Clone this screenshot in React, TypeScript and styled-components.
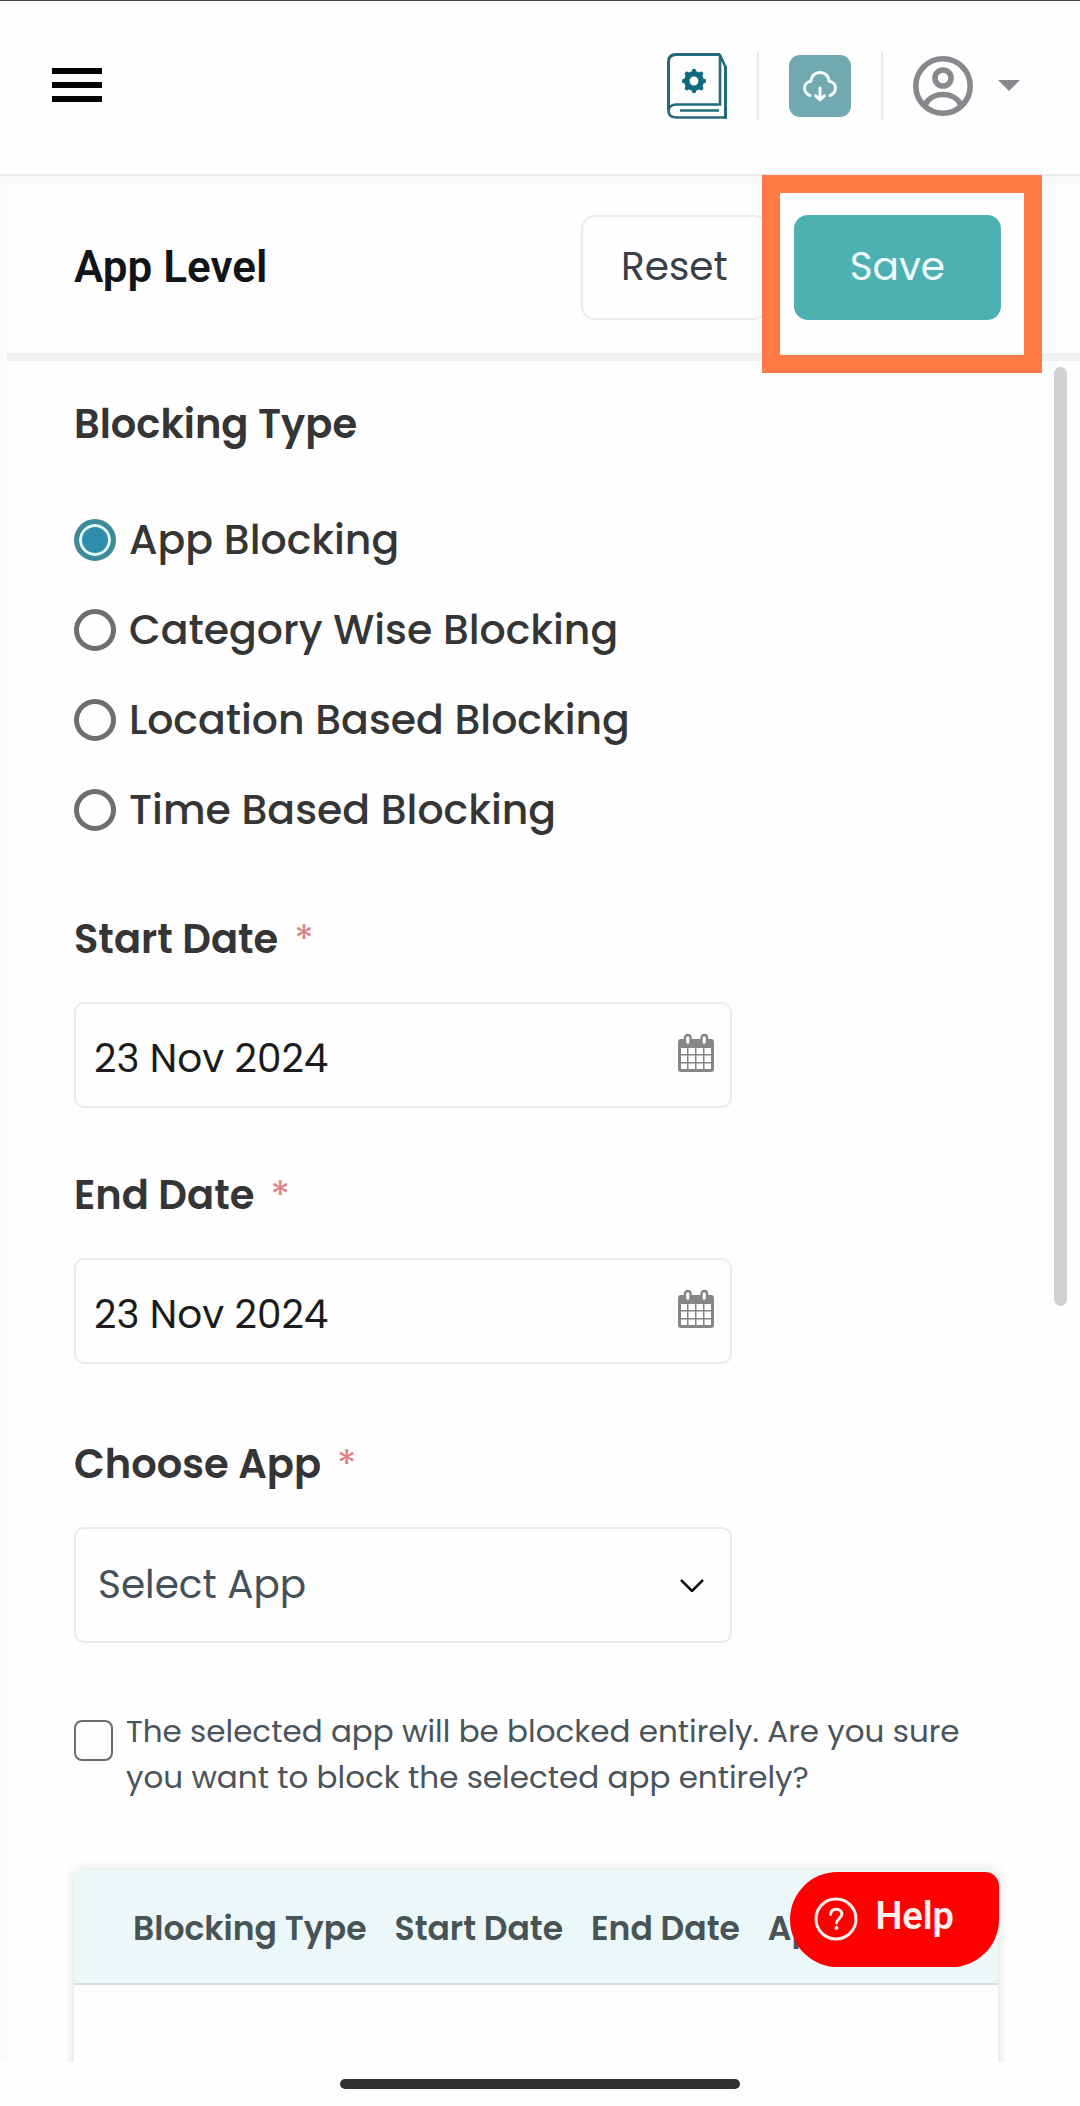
import React, { useState } from "react";
import styled, { createGlobalStyle } from "styled-components";

const GlobalStyle = createGlobalStyle`
  *, *::before, *::after { box-sizing: border-box; }
  body {
    margin: 0;
    background: #fefefe;
    font-family: Poppins, Inter, sans-serif;
    color: #353535;
  }
  button, input, select { font: inherit; color: inherit; margin: 0; }
`;

const Page = styled.div`
  display: flex;
  flex-direction: column;
  height: 100vh;
  overflow: hidden;
  border-top: 1px solid #444;
`;

const Header = styled.header`
  display: flex;
  align-items: center;
  justify-content: space-between;
  flex: none;
  height: 175px;
  padding: 0 60px 4px 52px;
  border-bottom: 2px solid #ececec;
`;

const PlainButton = styled.button`
  display: flex;
  align-items: center;
  padding: 0;
  border: 0;
  background: none;
  cursor: pointer;
`;

const HeaderTools = styled.div`
  display: flex;
  align-items: center;
  gap: 30px;
`;

const Divider = styled.span`
  width: 2px;
  height: 68px;
  background: #ebebeb;
`;

const CloudButton = styled(PlainButton)`
  justify-content: center;
  width: 62px;
  height: 62px;
  border-radius: 11px;
  background: #71a9b0;
`;

const AccountButton = styled(PlainButton)`
  gap: 25px;
`;

const Shell = styled.div`
  display: flex;
  flex: 1;
  flex-direction: column;
  min-height: 0;
  border-left: 7px solid #fafafa;
`;

const TitleBar = styled.div`
  display: flex;
  align-items: flex-start;
  justify-content: space-between;
  flex: none;
  padding: 39px 79px 33px 67px;
  border-bottom: 8px solid #f0f0f0;
  background: linear-gradient(#f8f8f8, #fefefe 16px);
`;

const Title = styled.h1`
  margin: 0;
  font: 600 44px/104px Roboto, sans-serif;
  color: #111517;
`;

const Actions = styled.div`
  display: flex;
  gap: 26px;
`;

const ActionButton = styled.button<{ $primary?: boolean }>`
  height: 105px;
  padding: 0 ${(p) => (p.$primary ? 56 : 38)}px 2px;
  border: ${(p) => (p.$primary ? "0" : "2px solid #ececec")};
  border-radius: 14px;
  background: ${(p) => (p.$primary ? "#4db1b2" : "#fefefe")};
  color: ${(p) => (p.$primary ? "#effdfd" : "#394047")};
  font-size: 39px;
  cursor: pointer;
`;

const Spotlight = styled.div`
  position: relative;
  &::after {
    content: "";
    position: absolute;
    inset: -40px -41px -53px -32px;
    border: 18px solid #ff7a45;
    pointer-events: none;
  }
`;

const Body = styled.div`
  display: flex;
  flex: 1;
  min-height: 0;
  overflow: hidden;
`;

const Form = styled.form`
  flex: 1;
  min-width: 0;
  padding: 35px 56px 0 67px;
  overflow: hidden;
`;

const ScrollTrack = styled.div`
  flex: none;
  width: 26px;
  padding-top: 6px;
`;

const ScrollThumb = styled.div`
  width: 13px;
  height: 55.4%;
  border-radius: 7px;
  background: #d0d0d0;
`;

const RadioGroup = styled.fieldset`
  display: flex;
  flex-direction: column;
  gap: 30px;
  margin: 0 0 71px;
  padding: 0;
  border: 0;
`;

const Legend = styled.legend`
  margin-bottom: 58px;
  padding: 0;
  font-size: 40px;
  font-weight: 600;
  line-height: 56px;
`;

const RadioRow = styled.label`
  display: flex;
  align-items: center;
  gap: 13px;
  font-size: 41px;
  font-weight: 500;
  line-height: 60px;
`;

const Radio = styled.input`
  appearance: none;
  flex: none;
  width: 42px;
  height: 42px;
  border: 5px solid #6e6e6e;
  border-radius: 50%;
  background: #fefefe;
  &:checked {
    border-color: #3d8a9b;
    background: #2f8eae;
    box-shadow: inset 0 0 0 3px #e6fbff;
  }
`;

const Field = styled.div<{ $after: number }>`
  display: flex;
  flex-direction: column;
  gap: 35px;
  margin-bottom: ${(p) => p.$after}px;
`;

const FieldLabel = styled.label`
  font-size: 40px;
  font-weight: 600;
  line-height: 56px;
`;

const Required = styled.span`
  margin-left: 16px;
  color: #dd8080;
  font-weight: 400;
`;

const Control = styled.div`
  position: relative;
  display: flex;
  align-items: center;
  width: 72%;
  max-width: 658px;
  min-width: 320px;
  border: 2px solid #ebebeb;
  border-radius: 10px;
`;

const DateInput = styled.input`
  flex: 1;
  min-width: 0;
  height: 102px;
  padding: 6px 0 0 18px;
  border: 0;
  outline: 0;
  background: none;
  color: #1c1c1c;
  font-size: 39px;
`;

const CalendarButton = styled(PlainButton)`
  margin-right: 16px;
  padding-bottom: 4px;
`;

const AppSelect = styled.select`
  appearance: none;
  width: 100%;
  height: 112px;
  padding: 0 60px 2px 22px;
  border: 0;
  outline: 0;
  background: none;
  color: #465059;
  font-size: 39px;
`;

const SelectArrow = styled.svg`
  position: absolute;
  right: 26px;
  pointer-events: none;
`;

const CheckRow = styled.label`
  display: flex;
  align-items: flex-start;
  gap: 13px;
  margin-bottom: 70px;
  color: #4a545b;
  font-size: 31px;
  line-height: 46px;
`;

const Checkbox = styled.input`
  appearance: none;
  flex: none;
  width: 39px;
  height: 41px;
  && { margin-top: 12px; }
  border: 2px solid #6c6c6c;
  border-radius: 8px;
  background: #fefefe;
  &:checked { background: #2f8eae; }
`;

const TableCard = styled.div`
  height: 600px;
  overflow: hidden;
  border-radius: 8px 8px 0 0;
  background: #fefefe;
  box-shadow: 0 0 12px rgba(60, 80, 80, 0.2);
`;

const Table = styled.table`
  width: 100%;
  border-collapse: collapse;
  white-space: nowrap;
`;

const HeadCell = styled.th`
  height: 114px;
  padding: 4px 28px 0 0;
  border-bottom: 2px solid #d5dede;
  background: #ebf7f8;
  color: #475354;
  font-size: 33px;
  font-weight: 600;
  text-align: left;
  &:first-child { padding-left: 59px; }
  &:last-child { width: 100%; }
`;

const HelpButton = styled.button`
  position: fixed;
  right: 81px;
  bottom: 139px;
  display: flex;
  align-items: center;
  gap: 17px;
  height: 95px;
  padding: 0 45px 2px 24px;
  border: 0;
  border-radius: 48px 14px 48px 48px;
  background: #fe0000;
  color: #fff0f0;
  font: 600 38px/44px Roboto, sans-serif;
  cursor: pointer;
`;

const HelpText = styled.span`
  padding-bottom: 6px;
`;

const HomeBar = styled.footer`
  display: flex;
  flex: none;
  justify-content: center;
  height: 44px;
  padding-top: 17px;
`;

const HomePill = styled.div`
  width: 37%;
  height: 10px;
  border-radius: 5px;
  background: #323232;
`;

const MenuIcon = () => (
  <svg width="50" height="36" viewBox="0 0 50 36" fill="#000" aria-hidden="true">
    <path d="M0 0h50v6H0zM0 14h50v6H0zM0 28h50v6H0z" />
  </svg>
);

const teeth = [0, 45, 90, 135, 180, 225, 270, 315];

const BookIcon = () => (
  <svg width="60" height="66" viewBox="0 0 60 66" fill="none" stroke="#236b78" aria-hidden="true">
    <path d="M53 1.500H9Q1.500 1.500 1.500 9V57" strokeWidth="3" />
    <path d="M53 1V51.500H9Q1.500 52 1.500 58T9 64.500H58.500V14L53 2" strokeWidth="2.600" />
    <path d="M58.500 13V65.500" strokeWidth="3" />
    <path d="M13 57.500H52" strokeWidth="2.400" />
    <circle cx="27" cy="28" r="7.200" stroke="#12697f" strokeWidth="5.500" />
    {teeth.map((a) => (
      <path key={a} d="M27 19V18" stroke="#12697f" strokeWidth="4.400" strokeLinecap="round" transform={`rotate(${a} 27 28)`} />
    ))}
  </svg>
);

const CloudIcon = () => (
  <svg width="34" height="32" viewBox="0 0 34 32" fill="none" stroke="#f4ffff" strokeWidth="3" strokeLinecap="round" strokeLinejoin="round" aria-hidden="true">
    <path d="M7 25.500C3.500 24 1.500 21.500 1.500 18.200c0-3.600 2.600-6.400 6.300-6.900C8.200 6 12 2.400 17 2.400s8.800 3.600 9.200 8.900c3.700.5 6.300 3.300 6.300 6.900 0 3.300-2 5.800-5.500 7.300" />
    <path d="M17 18v11.500M12.500 25.700l4.500 4.300 4.500-4.300" />
  </svg>
);

const AccountIcon = () => (
  <svg width="60" height="60" viewBox="0 0 60 60" fill="none" stroke="#88888f" strokeWidth="5.600" aria-hidden="true">
    <circle cx="30" cy="30" r="27.200" />
    <circle cx="30" cy="22" r="8" />
    <path d="M12 49C15 42.500 22 38.500 30 38.500S45 42.500 48 49" />
  </svg>
);

const CaretIcon = () => (
  <svg width="22" height="11" viewBox="0 0 22 11" fill="#88888f" aria-hidden="true">
    <path d="M0 0h22L11 11z" />
  </svg>
);

const CalendarIcon = () => (
  <svg width="36" height="40" viewBox="0 0 36 40" aria-hidden="true">
    <rect x="0" y="6" width="36" height="33" rx="3" fill="#858585" />
    <path
      d="M3 15h6v6H3zM10.500 15h6.500v6h-6.500zM18.500 15H25v6h-6.500zM26.500 15H33v6h-6.500zM3 22.500h6V29H3zM10.500 22.500h6.500V29h-6.500zM18.500 22.500H25V29h-6.500zM26.500 22.500H33V29h-6.500zM3 30.500h6V36H3zM10.500 30.500h6.500V36h-6.500zM18.500 30.500H25V36h-6.500zM26.500 30.500H33V36h-6.500z"
      fill="#fefefe"
    />
    <rect x="7" y="2" width="5.500" height="10" rx="2.700" fill="#fefefe" stroke="#858585" strokeWidth="2.400" />
    <rect x="23.500" y="2" width="5.500" height="10" rx="2.700" fill="#fefefe" stroke="#858585" strokeWidth="2.400" />
  </svg>
);

const HelpIcon = () => (
  <svg width="44" height="44" viewBox="0 0 44 44" fill="none" stroke="#fff0f0" strokeWidth="3" strokeLinecap="round" aria-hidden="true">
    <circle cx="22" cy="22" r="20" />
    <path d="M16.500 17.500c.3-3.300 2.600-5.300 5.700-5.300 3.300 0 5.600 2 5.600 4.900 0 4.300-5.300 4.600-5.300 9" />
    <circle cx="22.500" cy="31" r="1" fill="#fff0f0" strokeWidth="2" />
  </svg>
);

const blockingTypes = [
  "App Blocking",
  "Category Wise Blocking",
  "Location Based Blocking",
  "Time Based Blocking",
];

const columns = ["Blocking Type", "Start Date", "End Date", "App"];

interface DateFieldProps {
  id: string;
  label: string;
  after: number;
}

function DateField({ id, label, after }: DateFieldProps) {
  const [value, setValue] = useState("23 Nov 2024");
  return (
    <Field $after={after}>
      <FieldLabel htmlFor={id}>
        {label}
        <Required>*</Required>
      </FieldLabel>
      <Control>
        <DateInput id={id} value={value} onChange={(e) => setValue(e.target.value)} />
        <CalendarButton type="button" aria-label={`Pick ${label}`}>
          <CalendarIcon />
        </CalendarButton>
      </Control>
    </Field>
  );
}

export default function App() {
  const [type, setType] = useState(blockingTypes[0]);
  return (
    <Page>
      <GlobalStyle />
      <Header>
        <PlainButton type="button" aria-label="Menu">
          <MenuIcon />
        </PlainButton>
        <HeaderTools>
          <PlainButton type="button" aria-label="Guide">
            <BookIcon />
          </PlainButton>
          <Divider />
          <CloudButton type="button" aria-label="Download">
            <CloudIcon />
          </CloudButton>
          <Divider />
          <AccountButton type="button" aria-label="Account">
            <AccountIcon />
            <CaretIcon />
          </AccountButton>
        </HeaderTools>
      </Header>
      <Shell>
        <TitleBar>
          <Title>App Level</Title>
          <Actions>
            <ActionButton type="reset" form="blocking">Reset</ActionButton>
            <Spotlight>
              <ActionButton type="submit" form="blocking" $primary>Save</ActionButton>
            </Spotlight>
          </Actions>
        </TitleBar>
        <Body>
          <Form id="blocking" onSubmit={(e) => e.preventDefault()}>
            <RadioGroup>
              <Legend>Blocking Type</Legend>
              {blockingTypes.map((name) => (
                <RadioRow key={name}>
                  <Radio
                    type="radio"
                    name="blocking-type"
                    checked={type === name}
                    onChange={() => setType(name)}
                  />
                  {name}
                </RadioRow>
              ))}
            </RadioGroup>
            <DateField id="start-date" label="Start Date" after={59} />
            <DateField id="end-date" label="End Date" after={72} />
            <Field $after={65}>
              <FieldLabel htmlFor="app">
                Choose App
                <Required>*</Required>
              </FieldLabel>
              <Control>
                <AppSelect id="app">
                  <option>Select App</option>
                </AppSelect>
                <SelectArrow width="24" height="14" viewBox="0 0 24 14" fill="none" stroke="#111" strokeWidth="2.600" aria-hidden="true">
                  <path d="M1 2l11 11L23 2" />
                </SelectArrow>
              </Control>
            </Field>
            <CheckRow>
              <Checkbox type="checkbox" />
              <span>
                The selected app will be blocked entirely. Are you sure you want to block the selected app entirely?
              </span>
            </CheckRow>
            <TableCard>
              <Table>
                <thead>
                  <tr>
                    {columns.map((name) => (
                      <HeadCell key={name} scope="col">{name}</HeadCell>
                    ))}
                  </tr>
                </thead>
              </Table>
            </TableCard>
          </Form>
          <ScrollTrack>
            <ScrollThumb />
          </ScrollTrack>
        </Body>
      </Shell>
      <HomeBar>
        <HomePill />
      </HomeBar>
      <HelpButton type="button">
        <HelpIcon />
        <HelpText>Help</HelpText>
      </HelpButton>
    </Page>
  );
}
